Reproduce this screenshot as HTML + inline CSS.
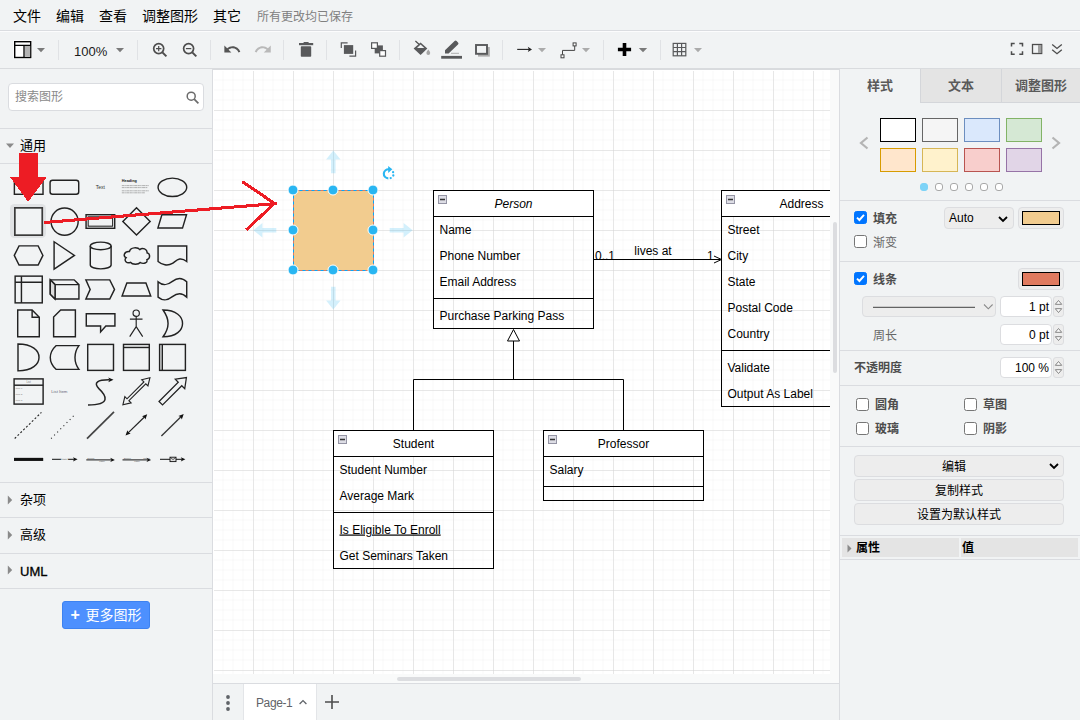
<!DOCTYPE html>
<html lang="zh-CN">
<head>
<meta charset="utf-8">
<title>draw.io</title>
<style>
*{box-sizing:border-box;margin:0;padding:0}
html,body{width:1080px;height:720px;overflow:hidden;background:#f1f3f4}
body{position:relative;font-family:"Liberation Sans","Noto Sans CJK SC",sans-serif;font-size:13px;color:#000}
.abs{position:absolute}
#menubar{position:absolute;left:0;top:0;width:1080px;height:31px;background:#f1f3f4;border-bottom:1px solid #dadce0}
#menubar span{position:absolute;top:7px;font-size:14px;line-height:18px;color:#000;white-space:nowrap}
#menubar span.st{color:#808080;font-size:12px;top:8px}
#toolbar{position:absolute;left:0;top:31px;width:1080px;height:39px;background:#f1f3f4;border-bottom:2px solid #d9dbde;box-shadow:inset 0 1px 0 #fcfcfd}
#toolbar svg{position:absolute;left:0;top:0}
#toolbar .zoom{position:absolute;left:74px;top:13px;font-size:13px;line-height:16px;color:#1a1a1a}
#sidebar{position:absolute;left:0;top:69px;width:213px;height:651px;background:#f1f3f4;border-right:1px solid #dadce0}
#search{position:absolute;left:8px;top:14px;width:196px;height:28px;background:#fff;border:1px solid #dadce0;border-radius:4px}
#search span{position:absolute;left:6px;top:4px;font-size:12px;line-height:18px;color:#8a8a8a}
.hr{position:absolute;left:0;width:212px;height:1px;background:#dadce0}
.sec{position:absolute;left:20px;font-size:13px;line-height:18px;color:#000;white-space:nowrap}
#more{position:absolute;left:62px;top:532px;width:88px;height:28px;background:#4d90fe;border:1px solid #3d82f0;border-radius:3px;color:#fff;font-size:14px;line-height:26px;text-align:center;white-space:nowrap}
#more b{font-size:16px;font-weight:bold;margin-right:2px}
#canvas{position:absolute;left:213px;top:70px;width:617px;height:604px;background:#fff;overflow:hidden}
#vscroll{position:absolute;left:830px;top:70px;width:9px;height:604px;background:#f9fafa}
#hscroll{position:absolute;left:213px;top:674px;width:626px;height:9px;background:#f9fafa}
#tabbar{position:absolute;left:213px;top:683px;width:626px;height:37px;background:#f1f3f4;border-top:1px solid #dadce0}
#format{position:absolute;left:839px;top:69px;width:241px;height:651px;background:#f1f3f4;border-left:1px solid #dadce0}
</style>
</head>
<body>
<div id="menubar">
<span style="left:13px">文件</span><span style="left:56px">编辑</span><span style="left:99px">查看</span><span style="left:142px">调整图形</span><span style="left:213px">其它</span><span class="st" style="left:257px">所有更改均已保存</span>
</div>
<div id="toolbar"><svg width="1080" height="38" viewBox="0 31 1080 38">
<g fill="none" stroke="#e0e2e5" stroke-width="1"><path d="M58.500 40v20M137.500 40v20M210.5 40v20M283.5 40v20M326.5 40v20M399.5 40v20M502.5 40v20M603.5 40v20M660.5 40v20"/></g>
<!-- panel icon -->
<rect x="14.200" y="41.200" width="17" height="16.800" fill="#fff" stroke="#fff" stroke-width="1.600"/><rect x="14.700" y="41.700" width="16" height="15.800" fill="#fff" stroke="#000" stroke-width="1.400"/>
<rect x="24.6" y="45.8" width="5.6" height="11" fill="#b3b3b3"/>
<path d="M14.7 45.3h16M24 45.3v12" stroke="#000" stroke-width="1.3" fill="none"/>
<!-- dropdown arrows -->
<g fill="#7a7a7a"><path d="M37 48h8l-4 4.2z"/><path d="M116 48h8l-4 4.2z"/><path d="M638.8 48h8.4l-4.2 4.2z"/></g>
<g fill="#ababab"><path d="M538 48h8l-4 4.2z"/><path d="M582 48h8l-4 4.2z"/><path d="M694 48h8l-4 4.2z"/></g>
<!-- zoom in/out -->
<g fill="none" stroke="#4d4d4d" stroke-width="1.7"><circle cx="158.7" cy="48.6" r="5"/><path d="M162.4 52.4l4 4" stroke-width="2"/><path d="M156 48.6h5.4M158.7 45.9v5.4" stroke-width="1.2"/>
<circle cx="188.6" cy="48.6" r="5"/><path d="M192.3 52.4l4 4" stroke-width="2"/><path d="M185.9 48.6h5.4" stroke-width="1.2"/></g>
<!-- undo / redo -->
<path transform="translate(222.8 40) scale(0.78)" fill="#555" d="M12.5 8c-2.65 0-5.05.99-6.9 2.6L2 7v9h9l-3.62-3.62c1.39-1.16 3.16-1.88 5.12-1.88 3.54 0 6.55 2.31 7.6 5.5l2.37-.78C21.08 11.03 17.15 8 12.5 8z"/>
<path transform="translate(253.6 40) scale(0.78)" fill="#b9b9b9" d="M18.4 10.6C16.55 8.99 14.15 8 11.5 8c-4.65 0-8.58 3.03-9.96 7.22L3.9 16c1.05-3.19 4.05-5.5 7.6-5.5 1.95 0 3.73.72 5.12 1.88L13 16h9V7l-3.6 3.6z"/>
<!-- trash -->
<g fill="#58595b"><rect x="299" y="43" width="14.2" height="2.2"/><rect x="303.6" y="42" width="5" height="1.6"/><rect x="300.8" y="46.2" width="10.4" height="10.6" rx="0.8"/></g>
<!-- to front -->
<g fill="none" stroke="#58595b" stroke-width="1.2"><path d="M347.6 42.8h-6.3v5.3M349.4 56.2h6.2v-5.8"/></g>
<rect x="343.9" y="45.1" width="9.3" height="8.8" fill="#58595b"/>
<!-- to back -->
<rect x="374.7" y="45.4" width="8.2" height="8" fill="#58595b"/>
<g fill="#fff" stroke="#58595b" stroke-width="1.2"><rect x="371.6" y="42.8" width="5.8" height="5.6"/><rect x="379.7" y="50.6" width="5.8" height="5.6"/></g>
<!-- fill bucket -->
<g><path d="M415.4 41l4.4 4" stroke="#4d4d4d" stroke-width="1.2" fill="none"/><path d="M420.6 42.6l6.7 6-6.7 6.5-7-6.5z" fill="#58595b"/><path d="M417 48l3.6-3.4 3.7 3.4z" fill="#f1f3f4"/><path d="M428.3 49.6c1 1.3 1.9 2.4 1.9 3.5a1.9 1.9 0 0 1-3.8 0c0-1.1.9-2.2 1.9-3.5z" fill="#a6a6a6"/></g>
<!-- pen -->
<g><path d="M445 53.6v-3.4l9.6-9.2a1.4 1.4 0 0 1 2 0l1.4 1.4a1.4 1.4 0 0 1 0 2l-9.4 9.2z" fill="#58595b"/><path d="M451 53.3h8" stroke="#a6a6a6" stroke-width="0.9"/><rect x="441.2" y="55.9" width="20.8" height="2.8" fill="#58595b"/></g>
<!-- shadow -->
<rect x="478" y="47" width="11.8" height="9.6" fill="#ababab"/>
<rect x="476" y="45" width="11" height="8.8" fill="#f1f3f4" stroke="#58595b" stroke-width="1.9"/>
<!-- arrow -->
<path d="M517.2 49.4h13" stroke="#222" stroke-width="1.1" fill="none"/><path d="M532 49.4l-4.2-2.6 1 2.6-1 2.6z" fill="#222"/>
<!-- waypoints -->
<g fill="none" stroke="#444" stroke-width="1"><path d="M562.5 54.8v-4.4h12.2v-4.6"/><rect x="561" y="54.8" width="3" height="3" fill="#fff"/><rect x="573.1" y="42.9" width="3" height="3" fill="#fff"/></g>
<!-- plus -->
<path d="M617.9 49.5h13.2M624.5 43v13" stroke="#000" stroke-width="3.6" fill="none"/>
<!-- grid -->
<g fill="none" stroke="#58595b" stroke-width="1.2"><rect x="673.2" y="43.4" width="12.6" height="12.4"/><path d="M677.4 43.4v12.4M681.6 43.4v12.4M673.2 47.5h12.6M673.2 51.7h12.6"/></g>
<!-- right icons -->
<g fill="none" stroke="#4d4d4d" stroke-width="1.5"><path d="M1011.5 46.5v-3h3.2M1019.3 43.5h3.2v3M1022.500 51.200v3h-3.200M1014.700 54.200h-3.200v-3"/></g>
<rect x="1032.500" y="44.500" width="9.200" height="9" fill="none" stroke="#4d4d4d" stroke-width="1.3"/><rect x="1038" y="45" width="3.400" height="8" fill="#a0a0a0"/>
<g fill="none" stroke="#4d4d4d" stroke-width="1.3"><path d="M1052.200 44.500l4.800 4 4.800-4M1052.200 49.700l4.800 4 4.800-4"/></g>
</svg>
<span class="zoom">100%</span>
</div>
<div id="sidebar"><div id="search"><span>搜索图形</span><svg class="abs" style="left:176px;top:6px" width="16" height="16" viewBox="0 0 16 16"><circle cx="6.2" cy="6.2" r="4" fill="none" stroke="#6b6b6b" stroke-width="1.5"/><path d="M9.2 9.2l4.2 4.2" stroke="#6b6b6b" stroke-width="1.7" fill="none"/></svg></div>
<div class="hr" style="top:59px"></div>
<svg class="abs" style="left:6px;top:74px" width="9" height="6" viewBox="0 0 9 6"><path d="M0 0.500h8l-4 4.600z" fill="#8a8a8a"/></svg>
<div class="sec" style="top:68px">通用</div>
<div class="hr" style="top:94px"></div>
<svg class="abs" style="left:0;top:95px" width="212" height="316" viewBox="0 164 212 316">
<rect x="10" y="204" width="36" height="34" rx="4.500" fill="#e0e2e4"/>
<g fill="#f1f3f4" stroke="#222" stroke-width="1.500" stroke-linejoin="miter">
<!-- row1 -->
<g transform="translate(28.700 187.300) scale(0.955)"><rect x="-15" y="-7.300" width="30" height="14.600"/></g>
<g transform="translate(64.400 187.300) scale(0.955)"><rect x="-15" y="-7.300" width="30" height="14.600" rx="2.600"/></g>
<g transform="translate(172.400 187.300) scale(0.955)"><ellipse rx="15" ry="9.600"/></g>
<!-- row2 -->
<g transform="translate(28.550 221.500)"><rect x="-13.700" y="-13.650" width="27.400" height="27.300" stroke="#3a3a3a" stroke-width="1.700"/></g>
<g transform="translate(64.600 221.600) scale(0.955)"><circle r="14.200"/></g>
<g transform="translate(100.400 221.500) scale(0.955)"><rect x="-15" y="-7.100" width="30" height="14.200"/><rect x="-12.800" y="-4.900" width="25.600" height="9.800" stroke-width="1.100"/></g>
<g transform="translate(136.500 221.400) scale(0.955)"><path d="M0 -14.300L14.300 0L0 14.300L-14.300 0z"/></g>
<g transform="translate(172.200 221.400) scale(0.955)"><path d="M-15 7L-10.800 -7L15 -7L10.800 7z"/></g>
<!-- row3 -->
<g transform="translate(28.600 255.400) scale(0.955)"><path d="M-15 0L-10 -10H10L15 0L10 10H-10z"/></g>
<g transform="translate(64.600 255.400) scale(0.955)"><path d="M-11 -14.300L10.300 0L-11 14.300z"/></g>
<g transform="translate(100.700 255.500) scale(0.955)"><path d="M-10.900 -10a10.900 4 0 0 1 21.800 0v20a10.900 4 0 0 1 -21.800 0z"/><path d="M-10.900 -10a10.900 4 0 0 0 21.800 0" fill="none"/></g>
<g transform="translate(136.600 255.800) scale(0.955)"><path d="M-7.500 -4.500C-13 -5 -14.500 0.500 -11 2C-14 5 -10 8.500 -6.500 6.800C-4.500 9.500 2 9.500 3.800 7C7 9 12 7.500 10.800 4C14.500 3 14.500 -2 11 -3C11.500 -7 6 -9 3.500 -6.500C1 -9.500 -6.500 -9 -7.500 -4.500z"/></g>
<g transform="translate(172.400 255.300) scale(0.955)"><path d="M-15 -9.700H15V6.500C7.500 0.500 4 6 0 8.500C-5 11.500 -11 10 -15 6.500z"/></g>
<!-- row4 -->
<g transform="translate(28.700 289.500) scale(0.955)"><rect x="-14.200" y="-14" width="28.400" height="28"/><path d="M-7.600 -14v28M-14.200 -7.500h28.400" fill="none"/></g>
<g transform="translate(64.600 289.400) scale(0.955)"><path d="M-15 -10H10L15 -5V10H-10L-15 5z"/><path d="M-15 -10L-10 -5H15M-10 -5V10" fill="none"/><path d="M-15 -10L-10 -5V10L-15 5z" fill="#dcdcdc"/></g>
<g transform="translate(100.200 289.400) scale(0.955)"><path d="M-15 -10H10L15 0L10 10H-15L-10.500 0z"/></g>
<g transform="translate(136.400 289.500) scale(0.955)"><path d="M-15 6.850L-10 -6.850H10L15 6.850z"/></g>
<g transform="translate(172.400 289.500) scale(0.955)"><path d="M-15 -8C-9 -3 -4.500 -5 0 -8.500C5 -12.500 10 -13 15 -8V8C10 3 5 3.500 0 7.500C-4.500 11 -9 13 -15 8z"/></g>
<!-- row5 -->
<g transform="translate(28.500 323.400) scale(0.955)"><path d="M-11.300 -14H3.800L11.300 -6.500V14H-11.300z"/><path d="M3.800 -14V-6.500H11.300" fill="none"/></g>
<g transform="translate(64.500 323.400) scale(0.955)"><path d="M-4 -14H11.400V14H-11.400V-6.600z"/></g>
<g transform="translate(100.600 323.200) scale(0.955)"><path d="M-15 -9.900H15V3H5.500L0 9.200V3H-15z"/></g>
<g transform="translate(136.200 323.300) scale(0.955)" stroke-width="1.200"><circle cx="0" cy="-10.600" r="3.300"/><path d="M0 -7.300V3.500M-6.600 -4.400H6.600M0 3.500L-6.800 13.900M0 3.500L6.800 13.900" fill="none"/></g>
<g transform="translate(172.600 323.400) scale(0.955)"><path d="M-10 -14C4 -14 10.400 -7 10.400 0C10.400 7 4 14 -10 14C-3 4 -3 -4 -10 -14z"/></g>
<!-- row6 -->
<g transform="translate(28.500 357.400) scale(0.955)"><path d="M-11 -14.100C4 -14.100 11 -7 11 0C11 7 4 14.100 -11 14.100z"/></g>
<g transform="translate(64.600 357.500) scale(0.955)"><path d="M-9 -12.400H15C9.500 -5 9.500 5 15 12.400H-9C-17 5 -17 -5 -9 -12.400z"/></g>
<g transform="translate(100.600 357.400) scale(0.955)"><rect x="-13.500" y="-13.600" width="27" height="27.200"/></g>
<g transform="translate(136.400 357.400) scale(0.955)"><rect x="-13.500" y="-13.600" width="27" height="27.200"/><path d="M-13.500 -10.400h27" fill="none"/></g>
<g transform="translate(172.500 357.400) scale(0.955)"><rect x="-13.500" y="-13.600" width="27" height="27.200"/><path d="M-10.700 -13.600v27.200" fill="none"/></g>
<!-- row7 -->
<g transform="translate(28.600 391.500) scale(0.955)"><rect x="-15.200" y="-13.200" width="30.400" height="26.400" stroke-width="1.500"/><path d="M-15.200 -6.600h30.400" fill="none" stroke-width="1.500"/></g>
<g transform="translate(100.600 391.400)"><path d="M-12.600 13.600C11 13.600 5.500 4 -1.500 -2.500C-8 -9 -2.500 -11.800 9 -11.600" fill="none"/><path d="M12.900 -11.700L7.600 -14L8.900 -11.600L7.700 -9.200z" fill="#111" stroke="none"/></g>
<g transform="translate(136.400 391.300) rotate(-45) scale(0.955)" stroke-width="1.200"><path d="M-20 0L-12.500 -4.600V-1.400H12.500V-4.600L20 0L12.500 4.600V1.400H-12.500V4.600z"/></g>
<g transform="translate(173.600 390.400) rotate(-45) scale(0.955)" stroke-width="1.300"><path d="M-19 -2.600H9.500V-7L19 0L9.500 7V2.600H-19z"/></g>
</g>
<!-- text icons -->
<text x="100.400" y="189.100" font-family="Liberation Sans, sans-serif" font-size="5" fill="#333" text-anchor="middle">Text</text>
<text x="121.800" y="182.400" font-family="Liberation Sans, sans-serif" font-size="3.800" font-weight="bold" fill="#111">Heading</text>
<g stroke="#777" stroke-width="0.550" fill="none" stroke-dasharray="2.200 0.400 1.400 0.500 3 0.400"><path d="M121.800 185.600h27M121.800 187.600h25.500M121.800 190.800h27M121.800 192.800h23"/></g>
<g font-family="Liberation Sans, sans-serif" fill="#777"><text x="28.600" y="382.900" font-size="2.800" text-anchor="middle">List</text><text x="15.600" y="389.400" font-size="2.400">Item 1</text><text x="15.600" y="395.400" font-size="2.400">Item 2</text><text x="15.600" y="401.400" font-size="2.400">Item 3</text>
<text x="51.200" y="393" font-size="4.300" fill="#667">List Item</text></g>
<!-- row8 -->
<g fill="none" stroke="#222">
<path d="M14.700 438.500L41.400 412.400" stroke-width="1.100" stroke-dasharray="2 2"/>
<path d="M51.100 438.500L75.800 413.700" stroke-width="1.100" stroke-dasharray="1 3.400"/>
<path d="M87 438.600L114 411.800" stroke-width="1.700" stroke="#444"/>
<path d="M127.600 433.400L145.200 416.300" stroke-width="1.200"/>
<path d="M161.400 436L181.500 416.200" stroke-width="1.300" stroke="#333"/>
</g>
<g fill="#111"><path d="M125.500 435.400L127.400 430.200L128.400 432.500L130.700 433.400z"/><path d="M147.200 414.300L145.400 419.500L144.300 417.200L142 416.300z"/><path d="M183.700 414.100L181.800 419.400L180.700 417L178.400 416z"/></g>
<!-- row9 -->
<path d="M14 459.400h29.200" stroke="#111" stroke-width="3.100" fill="none"/>
<g fill="none" stroke="#111" stroke-width="1">
<path d="M52 459.300h22M86.300 459.900h25M122.500 459.900h25M160 459.300h22"/></g>
<g fill="#111"><path d="M77.600 459.300l-4.600 -2.100l1.100 2.100l-1.100 2.100z"/><path d="M114.900 459.900l-4.600 -2.100l1.100 2.100l-1.100 2.100z"/><path d="M151.100 459.900l-4.600 -2.100l1.100 2.100l-1.100 2.100z"/><path d="M185.400 459.300l-4.600 -2.100l1.100 2.100l-1.100 2.100z"/></g>
<g font-family="Liberation Sans, sans-serif" font-size="2.300" fill="#555" text-anchor="middle"><text x="64.500" y="460.100" stroke="#f1f3f4" stroke-width="1.400" paint-order="stroke">Label</text><text x="91" y="459.200">Source</text><text x="102" y="461.900">Label</text><text x="127.400" y="459.200">Source</text><text x="137" y="461.900">Label</text><text x="146.500" y="459.200">Target</text></g>
<rect x="170" y="457.200" width="6" height="4.400" fill="#ddd" stroke="#111" stroke-width="0.900"/><path d="M170.200 457.400l2.800 2.200l2.800 -2.200" fill="none" stroke="#111" stroke-width="0.600"/>
</svg>
<div class="hr" style="top:413px"></div>
<div class="hr" style="top:448px"></div>
<div class="hr" style="top:484px"></div>
<div class="hr" style="top:519px"></div>
<svg class="abs" style="left:7px;top:426px" width="6" height="10" viewBox="0 0 6 10"><path d="M0.800 0.600v8.800l4.400-4.400z" fill="#8a8a8a"/></svg>
<svg class="abs" style="left:7px;top:461px" width="6" height="10" viewBox="0 0 6 10"><path d="M0.800 0.600v8.800l4.400-4.400z" fill="#8a8a8a"/></svg>
<svg class="abs" style="left:7px;top:496px" width="6" height="10" viewBox="0 0 6 10"><path d="M0.800 0.600v8.800l4.400-4.400z" fill="#8a8a8a"/></svg>
<div class="sec" style="top:422px">杂项</div>
<div class="sec" style="top:457px">高级</div>
<div class="sec" style="top:494px;-webkit-text-stroke:0.300px #000">UML</div>
<div id="more"><b>+</b> 更多图形</div>
</div>
<div id="canvas"><svg class="abs" style="left:0;top:0" width="618" height="604" viewBox="213 70 618 604" font-family="Liberation Sans, sans-serif" font-size="12">
<defs><pattern id="grid" x="213" y="70" width="40" height="40" patternUnits="userSpaceOnUse"><path d="M 0 10 L 40 10 M 10 0 L 10 40 M 0 20 L 40 20 M 20 0 L 20 40 M 0 30 L 40 30 M 30 0 L 30 40" fill="none" stroke="#d0d0d0" opacity="0.13" stroke-width="1"/><path d="M 40 0 L 0 0 0 40" fill="none" stroke="#d0d0d0" stroke-width="1"/></pattern></defs>
<rect x="214" y="71" width="617" height="603" fill="url(#grid)"/>
<!-- selected square -->
<rect x="293.500" y="190.500" width="80" height="80" fill="#f2cc8f" stroke="#e07a5f" stroke-width="1"/>
<rect x="293.500" y="190.500" width="80" height="80" fill="none" stroke="#00a8ff" stroke-width="1" stroke-dasharray="3 3"/>
<g fill="#29b6f2" opacity="0.2">
<path d="M333.300 150.400l7.200 9h-4.950v13.900h-4.500v-13.900h-4.950z"/>
<path d="M333.300 309.600l7.200 -9h-4.950v-13.900h-4.500v13.900h-4.950z"/>
<path d="M412.600 230.300l-9 7.200v-4.950h-13.900v-4.500h13.900v-4.950z"/>
<path d="M253.400 230.300l9 7.200v-4.950h13.900v-4.500h-13.900v-4.950z"/>
</g>
<g fill="#29b6f2" stroke="#fff" stroke-width="1"><circle cx="293" cy="190" r="5"/><circle cx="333" cy="190" r="5"/><circle cx="373" cy="190" r="5"/><circle cx="293" cy="230" r="5"/><circle cx="373" cy="230" r="5"/><circle cx="293" cy="270" r="5"/><circle cx="333" cy="270" r="5"/><circle cx="373" cy="270" r="5"/></g>
<!-- rotation handle -->
<g fill="#29b6f2"><path d="M389.100 169.400A4.500 4.500 0 1 0 388.320 178.330" fill="none" stroke="#29b6f2" stroke-width="2.100"/><path d="M388.200 165.900L392.300 169.300L388.200 172.900z"/><circle cx="390.700" cy="178.100" r="1.150"/><circle cx="393.300" cy="175.500" r="1.150"/><circle cx="393.100" cy="172.200" r="1.150"/></g>
<!-- edges -->
<g fill="none" stroke="#000" stroke-width="1">
<path d="M593.500 259.500H720.500"/><path d="M714 256L721.500 259.500L714 263"/>
<path d="M413.500 430V379.500H623.500V430M513.500 379.500V341"/>
<path d="M513.500 329.500L519.500 341H507.500z" fill="#fff"/>
</g>
<!-- Person -->
<g>
<rect x="433.500" y="190.500" width="160" height="26" fill="#fff"/><rect x="433.500" y="190.500" width="160" height="138" fill="none" stroke="#000"/>
<path d="M433.500 216.500h160M433.500 298.500h160" stroke="#000" fill="none"/>
<text x="513.500" y="207.500" text-anchor="middle" font-style="italic">Person</text>
<text x="439.500" y="233.500">Name</text><text x="439.500" y="259.500">Phone Number</text><text x="439.500" y="285.500">Email Address</text><text x="439.500" y="319.500">Purchase Parking Pass</text>
</g>
<!-- Address -->
<g>
<rect x="721.500" y="190.500" width="160" height="26" fill="#fff"/><rect x="721.500" y="190.500" width="160" height="216" fill="none" stroke="#000"/>
<path d="M721.500 216.500h160M721.500 350.500h160" stroke="#000" fill="none"/>
<text x="801.500" y="207.500" text-anchor="middle">Address</text>
<text x="727.500" y="233.500">Street</text><text x="727.500" y="259.500">City</text><text x="727.500" y="285.500">State</text><text x="727.500" y="311.500">Postal Code</text><text x="727.500" y="337.500">Country</text><text x="727.500" y="371.500">Validate</text><text x="727.500" y="397.500">Output As Label</text>
</g>
<!-- Student -->
<g>
<rect x="333.500" y="430.500" width="160" height="26" fill="#fff"/><rect x="333.500" y="430.500" width="160" height="138" fill="none" stroke="#000"/>
<path d="M333.500 456.500h160M333.500 512.500h160" stroke="#000" fill="none"/>
<text x="413.500" y="447.500" text-anchor="middle">Student</text>
<text x="339.500" y="473.500">Student Number</text><text x="339.500" y="499.500">Average Mark</text><text x="339.500" y="533.500" text-decoration="underline">Is Eligible To Enroll</text><text x="339.500" y="559.500">Get Seminars Taken</text>
</g>
<!-- Professor -->
<g>
<rect x="543.500" y="430.500" width="160" height="26" fill="#fff"/><rect x="543.500" y="430.500" width="160" height="70" fill="none" stroke="#000"/>
<path d="M543.500 456.500h160M543.500 486.500h160" stroke="#000" fill="none"/>
<text x="623.500" y="447.500" text-anchor="middle">Professor</text>
<text x="549.500" y="473.500">Salary</text>
</g>
<!-- collapse icons -->
<g fill="#dddde5" stroke="#9494a4" stroke-width="1"><rect x="438.500" y="195.500" width="8" height="8"/><rect x="726.500" y="195.500" width="8" height="8"/><rect x="338.500" y="435.500" width="8" height="8"/><rect x="548.500" y="435.500" width="8" height="8"/></g>
<path d="M440 199.500h5M728 199.500h5M340 439.500h5M550 439.500h5" stroke="#333" stroke-width="1.400" fill="none"/>
<!-- edge labels -->
<text x="595" y="259.500">0..1</text><text x="653" y="255" text-anchor="middle">lives at</text><text x="707" y="259.500">1</text>
</svg>
</div>
<div id="vscroll"><div class="abs" style="left:3px;top:152px;width:4px;height:151px;border-radius:2px;background:#dcdde0"></div></div>
<div id="hscroll"><div class="abs" style="left:184px;top:3px;width:184px;height:4px;border-radius:2px;background:#dcdde0"></div></div>
<div id="tabbar"><svg class="abs" style="left:11px;top:10px" width="8" height="18" viewBox="0 0 8 18"><circle cx="4" cy="3" r="1.900" fill="#5f6368"/><circle cx="4" cy="9" r="1.900" fill="#5f6368"/><circle cx="4" cy="15" r="1.900" fill="#5f6368"/></svg>
<div class="abs" style="left:30px;top:0;width:74px;height:36px;background:#fff;border-left:1px solid #e3e5e8;border-right:1px solid #e3e5e8"></div>
<div class="abs" style="left:43px;top:11px;font-size:12px;line-height:16px;color:#5f6368;letter-spacing:-0.400px;white-space:nowrap">Page-1</div>
<svg class="abs" style="left:85px;top:14px" width="10" height="8" viewBox="0 0 10 8"><path d="M1.600 6L5 2.600L8.400 6" fill="none" stroke="#5f6368" stroke-width="1.300"/></svg>
<svg class="abs" style="left:111px;top:10px" width="16" height="16" viewBox="0 0 16 16"><path d="M1 8h14M8 1v14" fill="none" stroke="#4d4d4d" stroke-width="1.600"/></svg>
</div>
<div id="format"><style>
#format .tab{position:absolute;top:0;height:34px;font-size:13px;font-weight:bold;color:#5a5a5a;text-align:center;line-height:33px;white-space:nowrap}
#format .tab.in{background:#e4e4e4;border-left:1px solid #d4d6da;border-bottom:1px solid #d4d6da}
#format .sep{position:absolute;left:0;width:240px;height:1px;background:#dadce0}
#format .sw{position:absolute;width:36px;height:24px;border:1px solid #000}
#format .dot{position:absolute;top:114px;width:8px;height:8px;border-radius:3px;border:1px solid #a8a8a8;background:#fff}
#format .cb{position:absolute;width:13px;height:13px;border:1px solid #767676;border-radius:2.500px;background:#fff}
#format .cb.on{background:#0075ff;border-color:#0075ff}
#format .lb{position:absolute;font-size:12px;line-height:16px;color:#4d4d4d;white-space:nowrap}
#format .lb.b{font-weight:bold}
#format .btn{position:absolute;background:#ededed;border:1px solid #dcdde0;border-radius:4px;font-size:12px;color:#000;text-align:center;white-space:nowrap}
#format .inp{position:absolute;left:160px;width:52px;height:21px;background:#fff;border:1px solid #dcdde0;border-radius:4px;font-size:12px;line-height:21px;text-align:right;padding-right:2px;color:#000;white-space:nowrap}
#format .spin{position:absolute;left:213px;width:11px;height:21px;background:#ededed;border:1px solid #dcdde0;border-radius:3px}
#format .cbtn{position:absolute;left:178px;width:46px;height:22px;background:#ededed;border:1px solid #dcdde0;border-radius:4px}
#format .cbtn i{position:absolute;left:3px;top:3px;width:38px;height:14px;border:1px solid #000}
</style>
<div class="tab" style="left:0;width:80px">样式</div>
<div class="tab in" style="left:80px;width:81px">文本</div>
<div class="tab in" style="left:161px;width:79px">调整图形</div>
<!-- swatches -->
<div class="sw" style="left:40px;top:49px;background:#fff;border-color:#000"></div>
<div class="sw" style="left:82px;top:49px;background:#f5f5f5;border-color:#666"></div>
<div class="sw" style="left:124px;top:49px;background:#dae8fc;border-color:#6c8ebf"></div>
<div class="sw" style="left:166px;top:49px;background:#d5e8d4;border-color:#82b366"></div>
<div class="sw" style="left:40px;top:79px;background:#ffe6cc;border-color:#d79b00"></div>
<div class="sw" style="left:82px;top:79px;background:#fff2cc;border-color:#d6b656"></div>
<div class="sw" style="left:124px;top:79px;background:#f8cecc;border-color:#b85450"></div>
<div class="sw" style="left:166px;top:79px;background:#e1d5e7;border-color:#9673a6"></div>
<svg class="abs" style="left:18px;top:67px" width="12" height="14" viewBox="0 0 12 14"><path d="M9.500 1.500L3 7L9.500 12.500" fill="none" stroke="#b4b4b4" stroke-width="2.200"/></svg>
<svg class="abs" style="left:210px;top:67px" width="12" height="14" viewBox="0 0 12 14"><path d="M2.500 1.500L9 7L2.500 12.500" fill="none" stroke="#b4b4b4" stroke-width="2.200"/></svg>
<div class="dot" style="left:80px;background:#7dd3f7;border-color:#7dd3f7"></div><div class="dot" style="left:95px"></div><div class="dot" style="left:110px"></div><div class="dot" style="left:125px"></div><div class="dot" style="left:140px"></div><div class="dot" style="left:155px"></div>
<div class="sep" style="top:131px"></div>
<!-- fill -->
<div class="cb on" style="left:14px;top:142px"><svg width="11" height="11" viewBox="0 0 11 11" style="position:absolute;left:0;top:0"><path d="M2 5.600L4.400 8L9 2.800" fill="none" stroke="#fff" stroke-width="1.900"/></svg></div>
<div class="lb b" style="left:33px;top:142px">填充</div>
<div class="btn" style="left:104px;top:138px;width:70px;height:22px;text-align:left;padding-left:4px;line-height:21px;font-size:12px">Auto<svg width="10" height="7" viewBox="0 0 10 7" style="position:absolute;left:53px;top:8px"><path d="M1 1l4 4l4-4" fill="none" stroke="#000" stroke-width="1.800"/></svg></div>
<div class="cbtn" style="top:138px"><i style="background:#f2cc8f"></i></div>
<div class="cb" style="left:14px;top:166px"></div>
<div class="lb" style="left:33px;top:166px;color:#666">渐变</div>
<div class="sep" style="top:192px"></div>
<!-- line -->
<div class="cb on" style="left:14px;top:203px"><svg width="11" height="11" viewBox="0 0 11 11" style="position:absolute;left:0;top:0"><path d="M2 5.600L4.400 8L9 2.800" fill="none" stroke="#fff" stroke-width="1.900"/></svg></div>
<div class="lb b" style="left:33px;top:203px">线条</div>
<div class="cbtn" style="top:199px"><i style="background:#e07a5f"></i></div>
<div class="btn" style="left:22px;top:227px;width:134px;height:21px"><svg width="132" height="19" viewBox="0 0 132 19" style="position:absolute;left:0;top:0"><path d="M10 10.300h102" stroke="#404040" stroke-width="1" fill="none"/><path d="M121 7.500l4.300 4.300l4.300-4.300" fill="none" stroke="#8a8a8a" stroke-width="1.100"/></svg></div>
<div class="inp" style="top:227px">1 pt</div>
<div class="spin" style="top:227px"><svg width="9" height="19" viewBox="0 0 9 19" style="position:absolute;left:0;top:0"><path d="M1.300 7.300L4.500 3.500L7.700 7.300zM1.300 11.700L4.500 15.500L7.700 11.700z" fill="#fff" stroke="#777" stroke-width="0.900"/></svg></div>
<div class="lb" style="left:33px;top:259px;color:#666">周长</div>
<div class="inp" style="top:255px;height:21px">0 pt</div>
<div class="spin" style="top:255px;height:21px"><svg width="9" height="19" viewBox="0 0 9 19" style="position:absolute;left:0;top:0"><path d="M1.300 7.300L4.500 3.500L7.700 7.300zM1.300 11.700L4.500 15.500L7.700 11.700z" fill="#fff" stroke="#777" stroke-width="0.900"/></svg></div>
<div class="sep" style="top:281px"></div>
<div class="lb b" style="left:14px;top:291px">不透明度</div>
<div class="inp" style="top:288px;height:21px">100 %</div>
<div class="spin" style="top:288px"><svg width="9" height="19" viewBox="0 0 9 19" style="position:absolute;left:0;top:0"><path d="M1.300 7.300L4.500 3.500L7.700 7.300zM1.300 11.700L4.500 15.500L7.700 11.700z" fill="#fff" stroke="#777" stroke-width="0.900"/></svg></div>
<div class="sep" style="top:316px"></div>
<div class="cb" style="left:16px;top:329px"></div><div class="lb b" style="left:35px;top:328px">圆角</div>
<div class="cb" style="left:124px;top:329px"></div><div class="lb b" style="left:143px;top:328px">草图</div>
<div class="cb" style="left:16px;top:353px"></div><div class="lb b" style="left:35px;top:352px">玻璃</div>
<div class="cb" style="left:124px;top:353px"></div><div class="lb b" style="left:143px;top:352px">阴影</div>
<div class="sep" style="top:377px"></div>
<div class="btn" style="left:14px;top:386px;width:210px;height:22px;line-height:22px;padding-right:10px">编辑<svg width="10" height="7" viewBox="0 0 10 7" style="position:absolute;left:194px;top:7px"><path d="M1 1l4 4l4-4" fill="none" stroke="#000" stroke-width="1.800"/></svg></div>
<div class="btn" style="left:14px;top:410px;width:210px;height:22px;line-height:22px">复制样式</div>
<div class="btn" style="left:14px;top:434px;width:210px;height:22px;line-height:22px">设置为默认样式</div>
<div class="sep" style="top:466px"></div>
<div class="abs" style="left:2px;top:469px;width:117px;height:19px;background:#e4e4e4"></div>
<div class="abs" style="left:121px;top:469px;width:117px;height:19px;background:#e4e4e4"></div>
<svg class="abs" style="left:7px;top:475px" width="5" height="9" viewBox="0 0 5 9"><path d="M0.500 0.500v8l4-4z" fill="#8a8a8a"/></svg>
<div class="lb b" style="left:16px;top:471px;color:#000;font-size:12px">属性</div>
<div class="lb b" style="left:122px;top:471px;color:#000;font-size:12px">值</div>
<div class="sep" style="top:490px"></div>
</div>
<svg class="abs" style="left:0;top:0;pointer-events:none" width="1080" height="720" viewBox="0 0 1080 720" shape-rendering="crispEdges">
<path d="M19.200 153H38V177H46.800L28.200 201.800L10 177H19.200z" fill="#ed1c24"/>
<g fill="none" stroke="#ed1c24" stroke-width="3.050" stroke-linecap="butt"><path d="M44 222.500L277 203.500"/><path d="M242.300 181.700L274.500 203.400L246.300 229.800" stroke-linejoin="round"/></g>
</svg>

</body>
</html>
